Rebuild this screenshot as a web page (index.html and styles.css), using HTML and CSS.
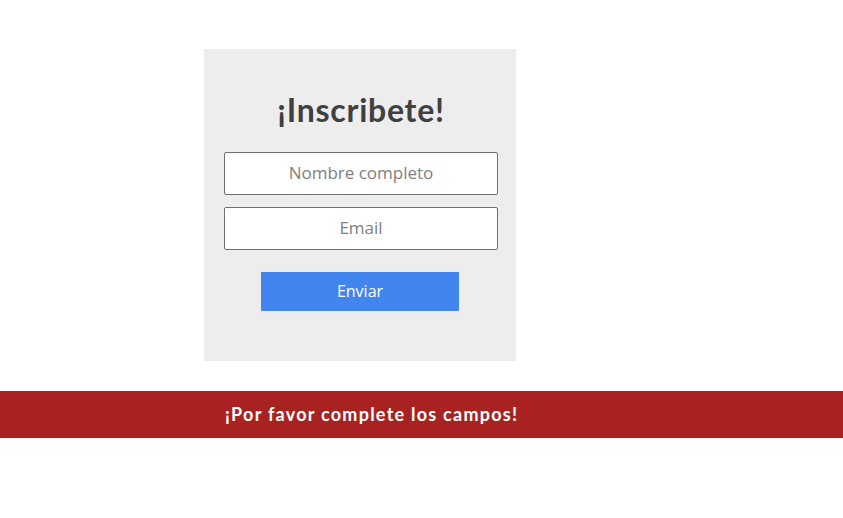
FILE: index.html
```
<!DOCTYPE html>
<html lang="es">
<head>
<meta charset="utf-8">
<title>Inscribete</title>
<link rel="stylesheet" href="styles.css">
</head>
<body>
<main class="page">
  <form class="card">
    <h1 class="title">¡Inscribete!</h1>
    <input class="field" type="text" placeholder="Nombre completo">
    <input class="field" type="email" placeholder="Email">
    <button class="send" type="button">Enviar</button>
  </form>
</main>
<div class="alert">¡Por favor complete los campos!</div>
</body>
</html>
```
FILE: styles.css
```
html, body {
  margin: 0;
  padding: 0;
  background: #ffffff;
  font-family: "Open Sans", "Lato", sans-serif;
}
.page {
  padding: 49px 0 30px 204px;
}
.card {
  box-sizing: border-box;
  width: 312px;
  height: 312px;
  background: #ededed;
  padding: 42px 18px 0 20px;
  display: flex;
  flex-direction: column;
  align-items: center;
}
.title {
  margin: 0 0 23px;
  font-family: "Lato", sans-serif;
  font-size: 32px;
  font-weight: 700;
  letter-spacing: 0.75px;
  line-height: 38px;
  color: #404040;
}
.field {
  box-sizing: border-box;
  width: 274px;
  height: 43px;
  margin: 0 0 12px;
  padding: 0 0 2px;
  border: 1px solid #707070;
  border-radius: 2px;
  background: #fff;
  text-align: center;
  font-family: inherit;
  font-size: 17px;
  color: #333;
}
.field::placeholder {
  color: #808080;
}
.send {
  width: 198px;
  height: 39px;
  margin: 10px 2px 0 0;
  padding: 0 0 2px;
  border: 0;
  background: #4285ee;
  color: #fff;
  font-family: inherit;
  font-size: 16px;
}
.alert {
  height: 47px;
  box-sizing: border-box;
  background: #a82222;
  color: #fff;
  font-family: "Lato", sans-serif;
  font-weight: 700;
  font-size: 18px;
  letter-spacing: 1.25px;
  line-height: 46px;
  padding-left: 225px;
}
```
